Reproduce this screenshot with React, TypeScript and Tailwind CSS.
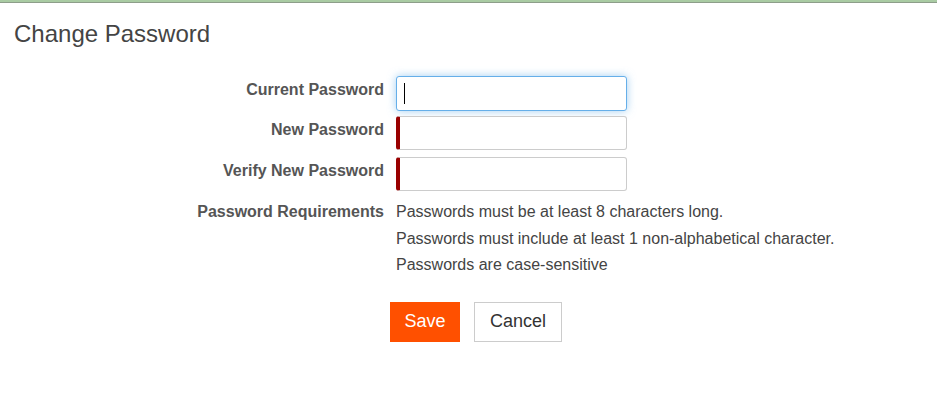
import React from "react";

export default function App() {
  const font = { fontFamily: '"Liberation Sans", Arial, sans-serif' };
  return (
    <div className="w-[937px] h-[409px] bg-white overflow-hidden" style={font}>
      <div className="h-[2px] bg-[#a9cba3]" />
      <div className="h-[1px] bg-[#8d9e8a]" />
      <h1 className="mt-[18px] ml-[14px] text-[24px] leading-[26px] text-[#444444] font-normal">
        Change Password
      </h1>

      <div className="mt-[29px] grid grid-cols-[384px_231px] gap-x-[12px]">
        <div className="text-right font-bold text-[16px] leading-5 text-[#555555] pt-[4px]">
          Current Password
        </div>
        <div className="h-[35px] rounded-[3px] border border-[#66afe9] shadow-[0_0_8px_rgba(102,175,233,0.6)] bg-white flex items-center pl-[7px]">
          <span className="w-[1px] h-[21px] bg-black" />
        </div>

        <div className="mt-[5px] text-right font-bold text-[16px] leading-5 text-[#555555] pt-[4px]">
          New Password
        </div>
        <input
          type="password"
          className="mt-[5px] h-[34px] rounded-[3px] border border-[#cccccc] border-l-[4px] border-l-[#990000] bg-white outline-none"
        />

        <div className="mt-[7px] text-right font-bold text-[16px] leading-5 text-[#555555] pt-[4px]">
          Verify New Password
        </div>
        <input
          type="password"
          className="mt-[7px] h-[34px] rounded-[3px] border border-[#cccccc] border-l-[4px] border-l-[#990000] bg-white outline-none"
        />

        <div className="mt-[8px] text-right font-bold text-[16px] leading-[26px] text-[#555555]">
          Password Requirements
        </div>
        <div className="mt-[8px] text-[16px] leading-[26.5px] text-[#444444] whitespace-nowrap">
          <div>Passwords must be at least 8 characters long.</div>
          <div>Passwords must include at least 1 non-alphabetical character.</div>
          <div>Passwords are case-sensitive</div>
        </div>
      </div>

      <div className="mt-[23px] pl-[390px] flex gap-[14px]">
        <button className="w-[70px] h-[40px] bg-[#ff5000] text-white text-[18px]">Save</button>
        <button className="w-[88px] h-[40px] bg-white border border-[#cccccc] text-[#333333] text-[18px]">
          Cancel
        </button>
      </div>
    </div>
  );
}
